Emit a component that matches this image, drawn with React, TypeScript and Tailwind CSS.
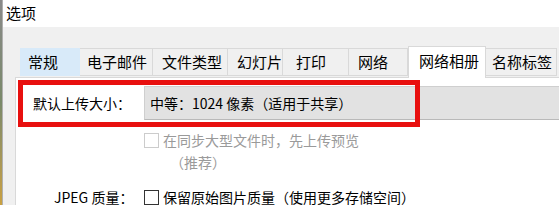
import React from "react";

const tabs: { label: string; w: number; pl: number; state?: "hover" | "active" }[] = [
  { label: "常规", w: 60, pl: 7, state: "hover" },
  { label: "电子邮件", w: 73, pl: 7 },
  { label: "文件类型", w: 75, pl: 9 },
  { label: "幻灯片", w: 55, pl: 9 },
  { label: "打印", w: 66, pl: 13 },
  { label: "网络", w: 59, pl: 9 },
  { label: "网络相册", w: 78, pl: 10, state: "active" },
  { label: "名称标签", w: 71, pl: 6 },
];

function Check({ disabled }: { disabled?: boolean }) {
  return (
    <div
      className={
        disabled
          ? "w-[15px] h-[15px] border border-[#cccccc] bg-white shrink-0"
          : "w-[15px] h-[15px] border border-[#333333] bg-white shrink-0"
      }
    />
  );
}

export default function App() {
  return (
    <div
      className="w-[559px] h-[205px] overflow-hidden flex bg-white text-black"
      style={{ fontFamily: '"Noto Sans CJK SC", "Noto Sans", sans-serif' }}
    >
      <div className="w-[3px] h-full flex shrink-0">
        <div className="w-[2px] h-full bg-gradient-to-b from-[#8a8a8a] via-[#7a8a6a] to-[#c9a040]" />
        <div className="w-[1px] h-full bg-[#b0b0b0]" />
      </div>
      <div className="flex-1 flex flex-col">
        <div className="h-[30px] pl-[3px] pt-[2px] text-[15px] leading-[22px]">选项</div>
        <div className="flex-1 bg-[#f0f0f0] flex flex-col pt-[18px]">
          <div className="flex items-end h-[32px] pl-[17px] relative z-10">
            {tabs.map((t) =>
              t.state === "active" ? (
                <div
                  key={t.label}
                  className="h-[32px] -mb-[1px] bg-white border border-b-0 border-[#d9d9d9] text-[15px] leading-[28px]"
                  style={{ width: t.w, paddingLeft: t.pl }}
                >
                  {t.label}
                </div>
              ) : (
                <div
                  key={t.label}
                  className={
                    t.state === "hover"
                      ? "h-[28px] mb-[1px] bg-[#d8eaf9] border border-[#d8eaf9] text-[15px] leading-[26px]"
                      : "h-[28px] mb-[1px] bg-[#f0f0f0] border border-l-0 border-[#d9d9d9] text-[15px] leading-[26px]"
                  }
                  style={{ width: t.w, paddingLeft: t.pl }}
                >
                  {t.label}
                </div>
              )
            )}
          </div>
          <div className="flex-1 ml-[12px] bg-white border-t border-l border-[#d9d9d9] relative flex flex-col">
            <div className="flex items-center mt-[8px]">
              <div className="w-[128px] pl-[17px] text-[14px] leading-[20px]">默认上传大小：</div>
              <div className="flex-1 h-[34px] bg-[#e2e2e2] border border-r-0 border-[#cfcfcf] border-b-[#b9b9b9] pl-[5px] flex items-center text-[14px]">
                中等：1024 像素（适用于共享）
              </div>
            </div>
            <div className="absolute left-[2px] top-[2px] w-[402px] h-[47px] border-[5px] border-[#e8100f]" />
            <div className="flex items-start mt-[13px] pl-[128px]">
              <Check disabled />
              <div className="ml-[4px] text-[14px] leading-[15px] text-[#9a9a9a]">
                在同步大型文件时，先上传预览
              </div>
            </div>
            <div className="pl-[154px] mt-[7px] text-[14px] leading-[15px] text-[#9a9a9a]">（推荐）</div>
            <div className="flex items-start mt-[20px]">
              <div className="w-[128px] pl-[38px] text-[14px] leading-[15px]">JPEG 质量：</div>
              <Check />
              <div className="ml-[4px] text-[14px] leading-[15px]">保留原始图片质量（使用更多存储空间）</div>
            </div>
          </div>
        </div>
      </div>
    </div>
  );
}
